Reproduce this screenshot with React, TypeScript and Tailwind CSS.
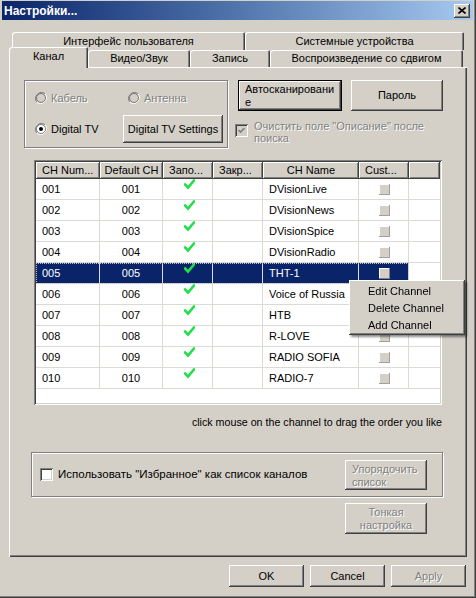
import React from 'react';

const FONT = { fontFamily: '"Liberation Sans", Arial, sans-serif' };

const raised =
  'shadow-[inset_-1px_-1px_0_#404040,inset_1px_1px_0_#ffffff,inset_-2px_-2px_0_#808080,inset_2px_2px_0_#d4d0c8]';
const sunken =
  'shadow-[inset_1px_1px_0_#808080,inset_-1px_-1px_0_#ffffff,inset_2px_2px_0_#404040,inset_-2px_-2px_0_#d4d0c8]';
const etched = 'border border-[#808080] shadow-[1px_1px_0_#ffffff,inset_1px_1px_0_#ffffff]';
const disabledText = 'text-[#808080] [text-shadow:1px_1px_0_#ffffff]';

const rows = [
  ['001', 'DVisionLive'],
  ['002', 'DVisionNews'],
  ['003', 'DVisionSpice'],
  ['004', 'DVisionRadio'],
  ['005', 'THT-1'],
  ['006', 'Voice of Russia'],
  ['007', 'HTB'],
  ['008', 'R-LOVE'],
  ['009', 'RADIO SOFIA'],
  ['010', 'RADIO-7'],
];

const Check: React.FC = () => (
  <svg width="11" height="11" viewBox="0 0 11 11">
    <path d="M1 5.5 L4 8.5 L10 1.5" fill="none" stroke="#22e04a" strokeWidth="2.6" strokeLinecap="square" />
  </svg>
);

const Radio: React.FC<{ checked?: boolean; disabled?: boolean }> = ({ checked, disabled }) => (
  <svg width="12" height="12" viewBox="0 0 12 12" className="shrink-0">
    <path d="M10.2 1.8 A6 6 0 0 0 1.8 10.2" fill="none" stroke="#808080" strokeWidth="1" />
    <path d="M1.8 10.2 A6 6 0 0 0 10.2 1.8" fill="none" stroke="#ffffff" strokeWidth="1" />
    <circle cx="6" cy="6" r="4.5" fill={disabled ? '#d4d0c8' : '#ffffff'} stroke="#404040" strokeWidth="0.6" />
    {checked && <circle cx="6" cy="6" r="2" fill="#000000" />}
  </svg>
);

const Tab: React.FC<{ label: string; w: string; selected?: boolean; front?: boolean }> = ({ label, w, selected, front }) => (
  <div
    className={`${w} ${
      selected ? 'h-[21px] relative z-10 -mb-[1px] pt-[3px]' : front ? 'h-[17px] pt-[2px]' : 'h-[18px] pt-[3px]'
    } shrink-0 rounded-tl-[3px] rounded-tr-[2px] bg-[#d4d0c8] text-center text-[11px] leading-[13px] shadow-[inset_1px_1px_0_#ffffff,inset_-1px_0_0_#404040,inset_-2px_0_0_#808080]`}
  >
    {label}
  </div>
);

export default function App() {
  return (
    <div className="w-[476px] h-[598px] bg-[#d4d0c8] text-black text-[11px] overflow-hidden" style={FONT}>
      <div className="w-full h-full flex flex-col pl-[2px] pr-[3px] pt-[1px] shadow-[inset_-1px_-1px_0_#404040,inset_-2px_-2px_0_#808080]">
        {/* title bar */}
        <div className="h-[19px] shrink-0 flex items-center justify-between pl-[2px] pr-[3px] bg-gradient-to-r from-[#0a246a] to-[#a6caf0]">
          <span className="text-white font-bold text-[12px]">Настройки...</span>
          <div className={`w-[16px] h-[14px] bg-[#d4d0c8] flex items-center justify-center ${raised}`}>
            <svg width="8" height="7" viewBox="0 0 8 7">
              <path d="M0.5 0.5 L7.5 6.5 M7.5 0.5 L0.5 6.5" stroke="#000" strokeWidth="1.6" />
            </svg>
          </div>
        </div>

        {/* tabs */}
        <div className="pl-[7px] pt-[12px]">
          <div className="flex pl-[3px]">
            <Tab label="Интерфейс пользователя" w="w-[233px]" />
            <Tab label="Системные устройства" w="w-[219px]" />
          </div>
          <div className="flex items-end h-[17px]">
            <Tab label="Канал" w="w-[79px]" selected />
            <Tab label="Видео/Звук" w="w-[102px]" front />
            <Tab label="Запись" w="w-[80px]" front />
            <Tab label="Воспроизведение со сдвигом" w="w-[193px]" front />
          </div>

          {/* panel */}
          <div className="w-[458px] h-[490px] relative shadow-[inset_1px_1px_0_#ffffff,inset_-1px_-1px_0_#404040,inset_-2px_-2px_0_#808080] pt-[13px]">
            <div className="flex h-[68px]">
              {/* radio group */}
              <div className={`ml-[15px] w-[204px] h-[68px] ${etched} pl-[10px] pt-[10px]`}>
                <div className="flex items-center h-[14px]">
                  <div className="flex items-center gap-[4px] w-[93px]">
                    <Radio disabled />
                    <span className={disabledText}>Кабель</span>
                  </div>
                  <div className="flex items-center gap-[4px]">
                    <Radio disabled />
                    <span className={disabledText}>Антенна</span>
                  </div>
                </div>
                <div className="flex items-center mt-[10px]">
                  <div className="flex items-center gap-[4px] w-[88px]">
                    <Radio checked />
                    <span>Digital TV</span>
                  </div>
                  <div className={`w-[100px] h-[28px] flex items-center justify-center ${raised}`}>Digital TV Settings</div>
                </div>
              </div>

              {/* right block */}
              <div className="ml-[10px]">
                <div className="flex gap-[9px]">
                  <div className="w-[104px] h-[31px] border border-black">
                    <div className={`w-full h-full ${raised} pl-[6px] pt-[2px] leading-[13px]`}>
                      Автосканировани
                      <br />е
                    </div>
                  </div>
                  <div className={`w-[92px] h-[31px] flex items-center justify-center ${raised}`}>Пароль</div>
                </div>
                <div className="flex mt-[9px] -ml-[3px]">
                  <div className={`w-[13px] h-[13px] mt-[4px] ${sunken} flex items-center justify-center`}>
                    <svg width="7" height="7" viewBox="0 0 7 7">
                      <path d="M0.5 3 L2.5 5 L6.5 1" fill="none" stroke="#808080" strokeWidth="1.6" />
                    </svg>
                  </div>
                  <div className={`ml-[6px] leading-[12px] ${disabledText}`}>
                    Очистить поле "Описание" после
                    <br />
                    поиска
                  </div>
                </div>
              </div>
            </div>

            {/* list view */}
            <div className={`ml-[25px] mt-[12px] w-[408px] h-[245px] bg-white p-[2px] ${sunken} relative`}>
              <div className="flex h-[17px] bg-[#d4d0c8]">
                {[
                  ['CH Num...', 'w-[64px] pl-[6px]'],
                  ['Default CH', 'w-[63px] justify-center'],
                  ['Запо...', 'w-[50px] pl-[6px]'],
                  ['Закр...', 'w-[50px] pl-[6px]'],
                  ['CH Name', 'w-[96px] justify-center'],
                  ['Cust...', 'w-[50px] pl-[6px]'],
                  ['', 'flex-1'],
                ].map(([t, c], i) => (
                  <div key={i} className={`${c} h-full flex items-center ${raised}`}>
                    {t}
                  </div>
                ))}
              </div>
              {rows.map(([n, name]) => {
                const sel = n === '005';
                return (
                  <div key={n} className="flex h-[21px]">
                    <div
                      className={`flex h-full ${
                        sel ? 'bg-[#0a246a] text-white outline-1 outline-dotted outline-[#c0c0c0] -outline-offset-1' : ''
                      }`}
                    >
                      <div className="w-[64px] pl-[6px] flex items-center border-r border-b border-[#dcdad4]">{n}</div>
                      <div className="w-[63px] flex items-center justify-center border-r border-b border-[#dcdad4]">{n}</div>
                      <div className="w-[50px] flex justify-center pl-[3px] border-r border-b border-[#dcdad4]">
                        <Check />
                      </div>
                      <div className="w-[50px] border-r border-b border-[#dcdad4]" />
                      <div className="w-[96px] pl-[6px] flex items-center border-r border-b border-[#dcdad4]">{name}</div>
                      <div className="w-[50px] flex items-center justify-center pl-[2px] border-r border-b border-[#dcdad4]">
                        <div
                          className={`w-[11px] h-[11px] bg-[#d4d0c8] ${
                            sel
                              ? 'shadow-[inset_-1px_-1px_0_#808080,inset_1px_1px_0_#ffffff]'
                              : 'shadow-[inset_-1px_-1px_0_#a0a0a0,inset_1px_1px_0_#ffffff]'
                          }`}
                        />
                      </div>
                    </div>
                    <div className="flex-1 border-b border-[#dcdad4]" />
                  </div>
                );
              })}

              {/* context menu */}
              <div
                className={`absolute left-[315px] top-[120px] w-[116px] h-[55px] bg-[#d4d0c8] ${raised} pt-[3px] pl-[19px] drop-shadow-[2px_2px_1px_rgba(0,0,0,0.45)]`}
              >
                <div className="h-[17px] flex items-center">Edit Channel</div>
                <div className="h-[17px] flex items-center">Delete Channel</div>
                <div className="h-[17px] flex items-center">Add Channel</div>
              </div>
            </div>

            <div className="w-[433px] text-right mt-[11px] text-[10.7px] leading-[13px]">
              click mouse on the channel to drag the order you like
            </div>

            {/* favourites group */}
            <div className={`ml-[22px] mt-[23px] w-[412px] h-[45px] ${etched} flex items-center pl-[8px] pr-[15px]`}>
              <div className={`w-[13px] h-[13px] bg-white ${sunken}`} />
              <span className="ml-[5px] text-[11.5px]">Использовать "Избранное" как список каналов</span>
              <div className={`ml-auto w-[82px] h-[30px] ${raised} pl-[7px] pt-[3px] leading-[13px] ${disabledText}`}>
                Упорядочить
                <br />
                список
              </div>
            </div>
            <div className="flex justify-end w-[418px] mt-[6px]">
              <div className={`w-[82px] h-[31px] ${raised} pt-[3px] leading-[13px] text-center ${disabledText}`}>
                Тонкая
                <br />
                настройка
              </div>
            </div>
          </div>
        </div>

        {/* bottom buttons */}
        <div className="flex justify-end gap-[6px] mt-[8px] pr-[7px]">
          <div className={`w-[75px] h-[22px] flex items-center justify-center ${raised}`}>OK</div>
          <div className={`w-[75px] h-[22px] flex items-center justify-center ${raised}`}>Cancel</div>
          <div className={`w-[75px] h-[22px] flex items-center justify-center ${raised} ${disabledText}`}>Apply</div>
        </div>
      </div>
    </div>
  );
}
